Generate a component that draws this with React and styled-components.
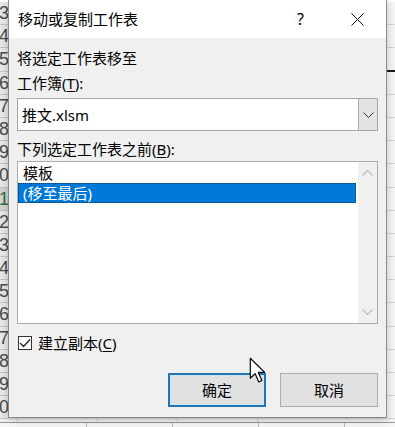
import React from 'react'
import styled, { createGlobalStyle } from 'styled-components'

const GlobalStyle = createGlobalStyle`
  html, body {
    margin: 0;
    padding: 0;
  }
  body {
    background: #fff;
    overflow: hidden;
  }
`

const uiFont = `"Noto Sans", "Noto Sans CJK SC", sans-serif`

const rows = [3, 4, 5, 6, 7, 8, 9, 10, 11, 12, 13, 14, 15, 16, 17, 18, 19, 20]

const App = () => {
  return (
    <Screen>
      <GlobalStyle />
      <Sheet>
        {rows.map(n => (
          <SheetRow key={n}>
            <RowHead $sel={n === 11}>{String(n % 10)}</RowHead>
            <Cells $active={n === 5} />
          </SheetRow>
        ))}
        <BottomStrip>
          <StripRow />
          <StripTabs />
        </BottomStrip>
      </Sheet>

      <Dialog>
        <TitleBar>
          <Title>移动或复制工作表</Title>
          <TitleButton>
            <Help>?</Help>
          </TitleButton>
          <TitleButton>
            <svg width="13" height="13" viewBox="0 0 13 13">
              <path d="M0.5 0.5 L12.5 12.5 M12.5 0.5 L0.5 12.5" stroke="#111" strokeWidth="1" fill="none" />
            </svg>
          </TitleButton>
        </TitleBar>

        <Body>
          <Label>将选定工作表移至</Label>
          <Label $gap={5}>工作簿(<u>T</u>):</Label>
          <Combo>
            <ComboText>推文.xlsm</ComboText>
            <DropButton>
              <svg width="11" height="6" viewBox="0 0 11 6">
                <path d="M0.5 0.5 L5.5 5.5 L10.5 0.5" stroke="#333" strokeWidth="1" fill="none" />
              </svg>
            </DropButton>
          </Combo>
          <Label $gap={8}>下列选定工作表之前(<u>B</u>):</Label>
          <ListBox>
            <ListItems>
              <Item>模板</Item>
              <Item $selected>(移至最后)</Item>
            </ListItems>
            <ScrollBar>
              <ScrollArrow>
                <svg width="11" height="6" viewBox="0 0 11 6">
                  <path d="M0.5 5.5 L5.5 0.5 L10.5 5.5" stroke="#c2c2c2" strokeWidth="1.4" fill="none" />
                </svg>
              </ScrollArrow>
              <ScrollArrow>
                <svg width="11" height="6" viewBox="0 0 11 6">
                  <path d="M0.5 0.5 L5.5 5.5 L10.5 0.5" stroke="#c2c2c2" strokeWidth="1.4" fill="none" />
                </svg>
              </ScrollArrow>
            </ScrollBar>
          </ListBox>
          <CheckRow>
            <CheckBox>
              <svg width="12" height="10" viewBox="0 0 12 10">
                <path d="M1 5 L4.5 8.5 L11 1.5" stroke="#222" strokeWidth="1.3" fill="none" />
              </svg>
            </CheckBox>
            <CheckLabel>建立副本(<u>C</u>)</CheckLabel>
          </CheckRow>
          <Buttons>
            <Button $primary>确定</Button>
            <Button>取消</Button>
          </Buttons>
        </Body>
      </Dialog>

      <Cursor width="18" height="27" viewBox="0 0 14 21">
        <path d="M1 1 L1 16.5 L4.8 13 L7.6 19.4 L10 18.3 L7.3 12 L12.2 12 Z" fill="#fff" stroke="#000" strokeWidth="0.9" strokeLinejoin="round" />
      </Cursor>
    </Screen>
  )
}

const Screen = styled.div`
  position: relative;
  width: 395px;
  height: 427px;
  overflow: hidden;
  background: #fff;
`

const Sheet = styled.div`
  display: flex;
  flex-direction: column;
  padding-top: 2px;
`

const SheetRow = styled.div`
  display: flex;
  height: 23.2px;
  flex-shrink: 0;
`

const RowHead = styled.div`
  width: 8px;
  overflow: hidden;
  box-sizing: border-box;
  background: ${p => (p.$sel ? '#d3d3d3' : '#e8e8e8')};
  border-bottom: 1px solid #c4c4c4;
  font-family: "Liberation Sans", sans-serif;
  font-size: 18px;
  line-height: 22px;
  color: ${p => (p.$sel ? '#2f6e47' : '#4a4a4a')};
  text-indent: -1px;
  white-space: nowrap;
`

const Cells = styled.div`
  flex: 1;
  box-sizing: border-box;
  background-color: #f6f6f6;
  background-image: repeating-linear-gradient(to right, transparent 0 79px, #d6d6d6 79px 80px);
  background-position: -70px 0;
  border-bottom: ${p => (p.$active ? '2px solid #1a1a1a' : '1px solid #d6d6d6')};
`

const BottomStrip = styled.div`
  display: flex;
  flex-direction: column;
`

const StripRow = styled.div`
  height: 3px;
  background-color: #f2f2f2;
  background-image: repeating-linear-gradient(to right, transparent 0 79px, #cfcfcf 79px 80px);
  background-position: -62px 0;
  border-bottom: 1px solid #9a9a9a;
`

const StripTabs = styled.div`
  height: 6px;
  background-color: #f7f7f7;
  background-image: repeating-linear-gradient(to right, transparent 0 85px, #b8b8b8 85px 86px);
  background-position: 1px 0;
`

const Dialog = styled.div`
  position: absolute;
  left: 8px;
  top: 0;
  width: 379px;
  height: 418px;
  box-sizing: border-box;
  border: 1px solid #8c8c8c;
  border-top: none;
  background: #f0f0f0;
  box-shadow: 0 2px 8px rgba(0, 0, 0, 0.22);
  display: flex;
  flex-direction: column;
  font-family: ${uiFont};
  color: #000;
`

const TitleBar = styled.div`
  height: 38px;
  flex-shrink: 0;
  background: #fff;
  display: flex;
  align-items: center;
  padding-left: 9px;
`

const Title = styled.div`
  flex: 1;
  font-size: 15px;
  line-height: 20px;
`

const TitleButton = styled.div`
  width: 57px;
  height: 38px;
  display: flex;
  align-items: center;
  justify-content: center;
`

const Help = styled.span`
  font-size: 16px;
  line-height: 20px;
`

const Body = styled.div`
  display: flex;
  flex-direction: column;
  padding: 10px 8px 10px 8px;
`

const Label = styled.div`
  font-size: 15px;
  line-height: 20px;
  height: 20px;
  margin-top: ${p => p.$gap || 0}px;
  white-space: nowrap;

  u {
    text-underline-offset: 2px;
  }
`

const Combo = styled.div`
  margin-top: 5px;
  height: 33px;
  box-sizing: border-box;
  display: flex;
  background: #fff;
  border: 1px solid #a6a6a6;
`

const ComboText = styled.div`
  flex: 1;
  display: flex;
  align-items: center;
  padding-left: 4px;
  font-size: 15px;
  line-height: 20px;
`

const DropButton = styled.div`
  width: 19px;
  box-sizing: border-box;
  background: #e3e3e3;
  border-left: 1px solid #adadad;
  display: flex;
  align-items: center;
  justify-content: center;
`

const ListBox = styled.div`
  margin-top: 2px;
  height: 163px;
  box-sizing: border-box;
  display: flex;
  background: #fff;
  border: 1px solid #ababab;
`

const ListItems = styled.div`
  flex: 1;
  display: flex;
  flex-direction: column;
  padding: 1px 2px 0 0;
`

const Item = styled.div`
  height: 20px;
  box-sizing: border-box;
  padding-left: 4px;
  font-size: 15px;
  line-height: 18px;
  white-space: nowrap;
  color: ${p => (p.$selected ? '#fff' : '#000')};
  background: ${p => (p.$selected ? '#0078d7' : 'transparent')};
  border: 1px dotted ${p => (p.$selected ? '#0b3a66' : 'transparent')};
`

const ScrollBar = styled.div`
  width: 19px;
  background: #f0f0f0;
  display: flex;
  flex-direction: column;
  justify-content: space-between;
`

const ScrollArrow = styled.div`
  height: 22px;
  display: flex;
  align-items: center;
  justify-content: center;
`

const CheckRow = styled.div`
  margin-top: 9px;
  height: 20px;
  display: flex;
  align-items: center;
  gap: 6px;
  padding-left: 1px;
`

const CheckBox = styled.div`
  width: 14px;
  height: 14px;
  box-sizing: border-box;
  border: 1px solid #333;
  background: #fff;
  display: flex;
  align-items: center;
  justify-content: center;
`

const CheckLabel = styled.div`
  font-size: 15px;
  line-height: 20px;

  u {
    text-underline-offset: 2px;
  }
`

const Buttons = styled.div`
  margin-top: 20px;
  display: flex;
  justify-content: flex-end;
  gap: 14px;
`

const Button = styled.div`
  width: 98px;
  height: 34px;
  box-sizing: border-box;
  display: flex;
  align-items: center;
  justify-content: center;
  background: #e1e1e1;
  border: ${p => (p.$primary ? '2px solid #2374b4' : '1px solid #adadad')};
  box-shadow: ${p => (p.$primary ? 'inset 0 0 0 1px #cfe6f7' : 'none')};
  font-size: 15px;
  line-height: 20px;
`

const Cursor = styled.svg`
  position: absolute;
  left: 249px;
  top: 357px;
`

export default App
